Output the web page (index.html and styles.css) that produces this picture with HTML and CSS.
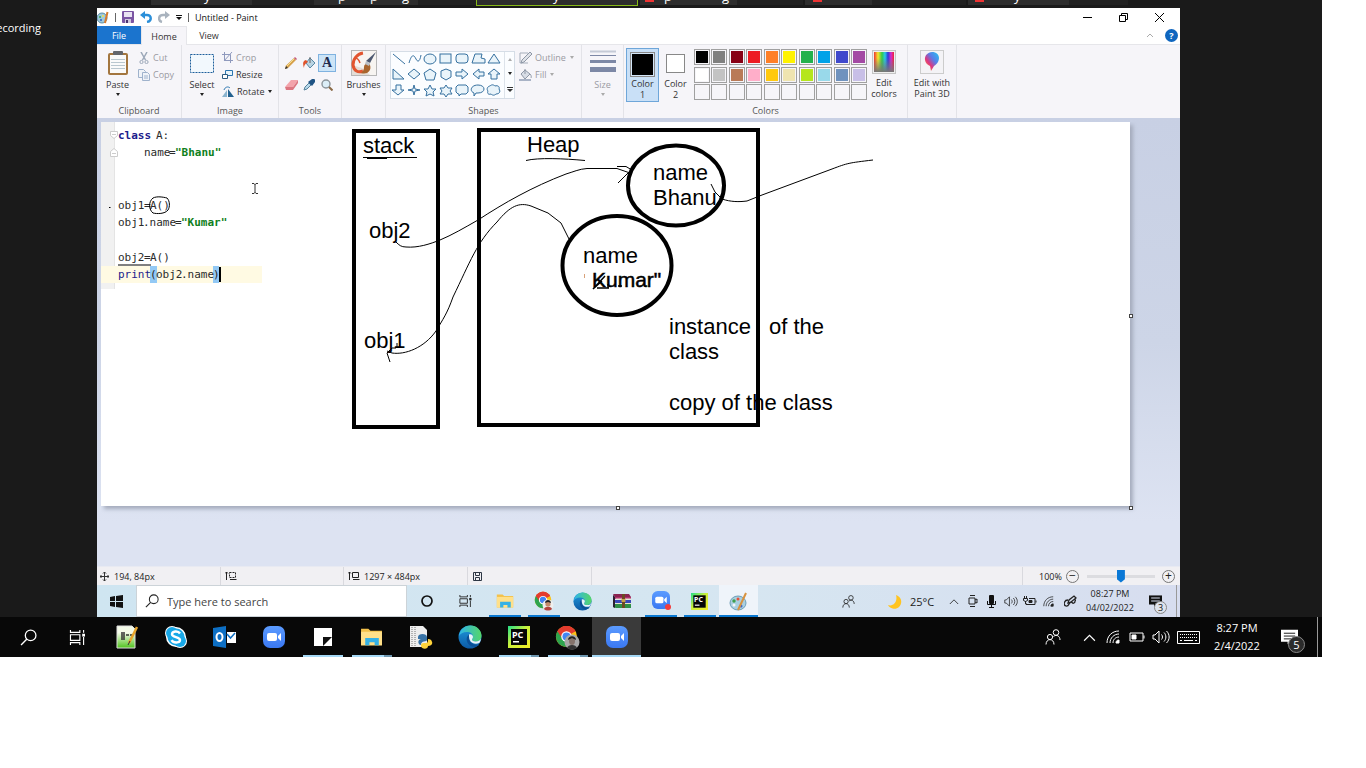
FILE: index.html
```html
<!DOCTYPE html>
<html lang="en">
<head>
<meta charset="utf-8">
<title>Untitled - Paint</title>
<link rel="stylesheet" href="styles.css">
</head>
<body>
<svg class="defs" aria-hidden="true">
  <defs>
    <linearGradient id="zoomBlue" x1="0" y1="0" x2="0" y2="1"><stop offset="0" stop-color="#5b9bff"/><stop offset="1" stop-color="#3a78f2"/></linearGradient>
    <linearGradient id="edgeA" x1="0" y1="0" x2="1" y2="0"><stop offset="0" stop-color="#2fb4ea"/><stop offset="1" stop-color="#55d668"/></linearGradient>
    <linearGradient id="edgeB" x1="0" y1="0" x2="0" y2="1"><stop offset="0" stop-color="#1f9bde"/><stop offset="1" stop-color="#0c59a4"/></linearGradient>
    <linearGradient id="pcFrame" x1="0" y1="0" x2="1" y2="1"><stop offset="0" stop-color="#21e08a"/><stop offset=".45" stop-color="#c9f03c"/><stop offset="1" stop-color="#f3ec25"/></linearGradient>
    <linearGradient id="rainbow"><stop offset="0" stop-color="#e33"/><stop offset=".2" stop-color="#f5e62d"/><stop offset=".4" stop-color="#31c94a"/><stop offset=".55" stop-color="#29c8e8"/><stop offset=".7" stop-color="#2c39d8"/><stop offset=".85" stop-color="#d62bd0"/><stop offset="1" stop-color="#e23"/></linearGradient>
    <linearGradient id="shade" x1="0" y1="0" x2="0" y2="1"><stop offset=".3" stop-color="#777" stop-opacity="0"/><stop offset="1" stop-color="#777"/></linearGradient>
    <linearGradient id="pin" x1="1" y1="0" x2="0" y2="1"><stop offset="0" stop-color="#22c7f0"/><stop offset=".4" stop-color="#5a7be8"/><stop offset=".65" stop-color="#e0367e"/><stop offset="1" stop-color="#f9c22d"/></linearGradient>
    <linearGradient id="greenNote" x1="0" y1="0" x2="0" y2="1"><stop offset=".3" stop-color="#f4fbe8"/><stop offset="1" stop-color="#4fc31c"/></linearGradient>
  </defs>
  <symbol id="i-zoom" viewBox="0 0 22 22"><rect width="22" height="22" rx="7" fill="url(#zoomBlue)"/><rect x="4" y="7" width="10" height="8" rx="2" fill="#fff"/><path d="M15 10l3-3v8l-3-3z" fill="#fff"/></symbol>
  <symbol id="i-folder" viewBox="0 0 22 20"><path d="M1 2h7l2 2h11v14H1z" fill="#f3c14b"/><path d="M1 5h20v13H1z" fill="#ffe08a"/><path d="M5 18v-7h13v7h-4v-3H9v3z" fill="#35b1e6"/></symbol>
  <symbol id="i-edge" viewBox="0 0 24 24"><circle cx="12" cy="12" r="11.500" fill="url(#edgeB)"/><path d="M1 11C2 4 7 .5 12.500.5 19 .5 23.500 5.500 23.500 10.500c0 4-3 6-6 6-2.500 0-3.500-1-3.500-2 0-.8 1-1.300 1-3 0-2.500-2.500-4.500-6-4.500C5 7 2 9 1 11z" fill="url(#edgeA)"/><path d="M10 10.500c-2 2-2 7 2 10 3 2 7 1.500 9-.5-2 .5-7 0-9-3.500-1.500-2.500-1-4.500 0-6-.5-.8-1.300-.7-2 0z" fill="#0b4f96"/><path d="M11 9.500c2-1 4 .5 4 2.500 0 1.200-1 1.700-1 2.500 0 1.300 1.500 2 3.500 2 3 0 5-1.500 5.500-3-.3 2-1 3.500-1.800 4.500-3 1.500-8 .8-9.400-3-.9-2.300-.8-4-.8-5.500z" fill="#e6f3f8"/></symbol>
  <symbol id="i-chrome" viewBox="0 0 24 24"><circle cx="12" cy="12" r="11" fill="#fbc116"/><path d="M12 12L2.500 6.500A11 11 0 0 1 21.500 6.500z" fill="#e33b2e"/><path d="M12 12L2.500 6.500A11 11 0 0 0 12 23l4.500-8z" fill="#2da44e"/><path d="M12 6.500h9.500a11 11 0 0 0-19 0L7.500 14z" fill="#e33b2e"/><circle cx="12" cy="12" r="5.500" fill="#fff"/><circle cx="12" cy="12" r="4.200" fill="#4285f4"/></symbol>
  <symbol id="i-pc" viewBox="0 0 22 22"><rect width="22" height="22" fill="url(#pcFrame)"/><rect x="3" y="3" width="16" height="16" fill="#060606"/><rect x="5" y="15" width="6" height="1.500" fill="#fff"/><text x="4" y="12" class="pc-text">PC</text></symbol>
  <symbol id="i-search" viewBox="0 0 16 16"><circle cx="10" cy="6" r="5" fill="none" stroke="currentColor" stroke-width="1.200"/><path d="M6.500 9.500L1 15" stroke="currentColor" stroke-width="1.300"/></symbol>
  <symbol id="i-task" viewBox="0 0 17 16"><path d="M1 0v2.500h10V0M1 16v-2.500h10V16M1 5h10v6H1zM15 0v3M15 7.500V16" fill="none" stroke="currentColor" stroke-width="1.200"/><rect x="13.500" y="4" width="3" height="3" fill="currentColor"/></symbol>
  <symbol id="i-people" viewBox="0 0 16 16"><circle cx="11" cy="3.500" r="2.800"/><circle cx="5" cy="8" r="2.600"/><path d="M1 15.500c0-6.500 8-6.500 8 0M8.500 7.500c3-2.500 6.500-.5 6.500 3.500"/></symbol>
  <symbol id="i-chev" viewBox="0 0 12 8"><path d="M1 7l5-5 5 5"/></symbol>
  <symbol id="i-wifi" viewBox="0 0 14 14"><path d="M1 13C1 6 6 1 13 1M4 13c0-5 4-9 9-9M7 13c0-3.500 2.500-6 6-6"/><path d="M10 13c0-2 1-3 3-3v3z" fill="currentColor"/></symbol>
  <symbol id="i-vol" viewBox="0 0 18 14"><path d="M1 5h2l4-4v12L3 9H1zM9.500 4.500c1.300 1.500 1.300 3.500 0 5M12 2.500c2.500 2.500 2.500 6.500 0 9M14.500 1c3.500 3.500 3.500 8.500 0 12"/></symbol>
  <symbol id="i-batt" viewBox="0 0 16 10"><path d="M1 1h13v8H1zM15 3.500v3"/><path d="M3 3h4v4H3z" fill="currentColor"/></symbol>
  <symbol id="i-size" viewBox="0 0 12 10"><path d="M1.500 9V1M0 2.500L1.500 1 3 2.500"/><path d="M4.500 1.500h6v5h-6z"/><path d="M5 8.500h6.500"/></symbol>
  <symbol id="i-note" viewBox="0 0 18 16"><path d="M0 0h18v13h-8l-3 3v-3H0z" fill="currentColor"/></symbol>
</svg>

<div class="screen">
  <div class="tabstrip">
    <div class="tab t1"><span>y</span></div><div class="tab t2"></div>
    <div class="tab t3"><span>p</span><span>p</span><span>g</span></div><div class="tab t4"></div>
    <div class="tab t5"><span>y</span></div>
    <div class="tab t6"><i class="yt"></i><span>p</span><span class="far">g</span></div><div class="tab t7"></div>
    <div class="tab t8"><i class="yt"></i></div><div class="tab t9"></div>
    <div class="tab t10"><i class="yt"></i><span>y</span></div><div class="tab t11"></div>
  </div>

  <div class="stage">
    <div class="recording">ecording</div>
    <main class="paint">
      <header class="titlebar">
        <svg width="12" height="13" viewBox="0 0 12 13"><ellipse cx="5" cy="7" rx="5" ry="5" fill="#9fc9dc" stroke="#5b8ea6"/><circle cx="3" cy="6" r="1" fill="#3ba04a"/><circle cx="6" cy="5" r="1" fill="#f6e04a"/><circle cx="4" cy="9" r="1" fill="#2a62c4"/><path d="M10.500 1L8 12" stroke="#d67a2c" stroke-width="2"/></svg>
        <span class="vline"></span>
        <button class="qa" aria-label="Save"><svg width="12" height="12" viewBox="0 0 12 12"><rect width="12" height="12" rx="1" fill="#7b55a3"/><rect x="2" y="1" width="8" height="5" fill="#e9e3f2"/><rect x="3" y="8" width="6" height="4" fill="#cfc7dd"/><rect x="4" y="9" width="2" height="3" fill="#4a3370"/></svg></button>
        <button class="qa" aria-label="Undo"><svg width="12" height="12" viewBox="0 0 12 12"><path d="M3 4h4c5 0 5 6 0 7" fill="none" stroke="#2b8fd9" stroke-width="2.400"/><path d="M0 4l5-4v8z" fill="#2b8fd9"/></svg></button>
        <button class="qa" aria-label="Redo"><svg width="12" height="12" viewBox="0 0 12 12"><path d="M9 4H5C0 4 0 10 4 11" fill="none" stroke="#a9b3be" stroke-width="2.400"/><path d="M12 4L7 0v8z" fill="#a9b3be"/></svg></button>
        <button class="qa small" aria-label="Customize"><svg width="6" height="5" viewBox="0 0 6 5"><path d="M0 .5h6" stroke="#111"/><path d="M0 2h6L3 5z" fill="#111"/></svg></button>
        <span class="vline"></span>
        <h1>Untitled - Paint</h1>
        <div class="wincontrols">
          <button aria-label="Minimize"><svg width="9" height="9" viewBox="0 0 9 9"><path d="M0 4.500h9" stroke="#000"/></svg></button>
          <button aria-label="Restore"><svg width="9" height="9" viewBox="0 0 9 9"><path d="M.5 2.500h6v6h-6zM2.500 2V.5h6v6H7" fill="none" stroke="#000"/></svg></button>
          <button aria-label="Close"><svg width="9" height="9" viewBox="0 0 9 9"><path d="M0 0l9 9M9 0L0 9" stroke="#000"/></svg></button>
        </div>
      </header>
      <nav class="menutabs">
        <button class="file">File</button><button class="home">Home</button><button class="view">View</button>
        <div class="helparea">
          <button aria-label="Collapse ribbon"><svg width="6" height="4" viewBox="0 0 6 4"><path d="M0 4l3-3 3 3" fill="none" stroke="#aaa"/></svg></button>
          <button class="help" aria-label="Help">?</button>
        </div>
      </nav>

      <section class="ribbon">
        <div class="group g-clip">
          <div class="body">
            <button class="big w-clip"><svg width="22" height="26" viewBox="0 0 22 26"><rect x="1" y="3" width="20" height="22" rx="2" fill="#a3763f"/><rect x="3" y="5" width="16" height="18" fill="#fafafa"/><path d="M4 9.500h14M4 12.500h14M4 15.500h14M4 18.500h14" stroke="#b9c7cf"/><rect x="6" y="1" width="10" height="4" rx="1" fill="#63666c"/></svg><span>Paste</span><b class="arrow"></b></button>
            <div class="stack">
              <button class="line off"><svg width="12" height="12" viewBox="0 0 12 12"><path d="M3 0l4.500 8M9 0L4.500 8" stroke="#9ba7b8" stroke-width="1.500"/><circle cx="3.500" cy="10" r="1.600" fill="none" stroke="#9ba7b8"/><circle cx="8.500" cy="10" r="1.600" fill="none" stroke="#9ba7b8"/></svg>Cut</button>
              <button class="line off"><svg width="12" height="12" viewBox="0 0 12 12"><path d="M.5.500h5l2 2v6h-7z" fill="#f0f3f8" stroke="#9fb2cc"/><path d="M4.500 3.500h5l2 2v6h-7z" fill="#f0f3f8" stroke="#9fb2cc"/><path d="M6 7h4M6 9h4" stroke="#9fb2cc"/></svg>Copy</button>
            </div>
          </div>
          <div class="caption">Clipboard</div>
        </div>
        <div class="group g-image">
          <div class="body">
            <button class="big w-sel"><svg width="24" height="26" viewBox="0 0 24 26"><rect x=".5" y="4.500" width="23" height="18" fill="#f2f8fd" stroke="#1d5f9b" stroke-dasharray="2 1"/></svg><span>Select</span><b class="arrow"></b></button>
            <div class="stack">
              <button class="line off"><svg width="11" height="11" viewBox="0 0 11 11"><path d="M2.500 0v8.500H11M0 2.500h8.500V11M10 0L2 9" fill="none" stroke="#8f99bd"/></svg>Crop</button>
              <button class="line"><svg width="11" height="11" viewBox="0 0 11 11"><path d="M3.500 1.500h7v5h-7z" fill="#e8f4fb" stroke="#2c76b0"/><path d="M.5 5.500h5v4h-5z" fill="#fff" stroke="#2c5a80"/></svg>Resize</button>
              <button class="line"><svg width="12" height="11" viewBox="0 0 12 11"><path d="M6 3l6 8H6z" fill="#23618f"/><path d="M5 4v7H0z" fill="#8bb4cf"/><path d="M2 4c1-3 4-4 6-2" fill="none" stroke="#2c76b0"/></svg>Rotate<b class="arrow side"></b></button>
            </div>
          </div>
          <div class="caption">Image</div>
        </div>
        <div class="group g-tools">
          <div class="toolgrid">
            <button aria-label="Pencil"><svg width="12" height="12" viewBox="0 0 12 12"><path d="M0 12l1-3.500 8-7.500 2 2-8 8z" fill="#d6a04c"/><path d="M0 12l1-3 2 2z" fill="#333"/><path d="M9 1l2 2 1-1-2-2z" fill="#c3577a"/><path d="M2 9l7-7" stroke="#f7e08c"/></svg></button>
            <button aria-label="Fill"><svg width="13" height="12" viewBox="0 0 13 12"><path d="M7 1l5 5-5 5-4-5z" fill="#b9d3e2" stroke="#5a88a4"/><path d="M7 0v6" stroke="#666"/><path d="M3 3C-1 4 0 8 1 11c0-3 1-4 4-6z" fill="#e0532c"/></svg></button>
            <button class="on" aria-label="Text">A</button>
            <button aria-label="Eraser"><svg width="13" height="10" viewBox="0 0 13 10"><path d="M6 0h7L8 7H0z" fill="#f3a3ab"/><path d="M0 7h8l5-7v3L8 10H1z" fill="#dc7681"/></svg></button>
            <button aria-label="Pick color"><svg width="12" height="12" viewBox="0 0 12 12"><path d="M1 11l1-3 4-4 2 2-4 4z" fill="#b7d9ec" stroke="#56829b"/><path d="M5 3l4 4 3-4c1-2-1-4-3-3z" fill="#1f5384"/></svg></button>
            <button aria-label="Magnifier"><svg width="12" height="12" viewBox="0 0 12 12"><circle cx="5" cy="5" r="4" fill="#dceef8" stroke="#8b949b" stroke-width="1.400"/><path d="M8 8l3.500 3.500" stroke="#8a6a47" stroke-width="2"/></svg></button>
          </div>
          <div class="caption">Tools</div>
        </div>
        <div class="group g-brush">
          <div class="body">
            <button class="big"><svg width="26" height="26" viewBox="0 0 26 26"><rect x=".5" y=".5" width="25" height="25" fill="#f7f4f1" stroke="#b6b6b6"/><path d="M1 25V15l10 3 8 7z" fill="#e4ddd6"/><path d="M12 3C6 4 2 9 2 15c1 6 5 8 10 6" fill="none" stroke="#e2552f" stroke-width="3"/><path d="M4 8c3 0 4 2 5 5" fill="none" stroke="#e2552f" stroke-width="1.500"/><path d="M25 2l-6 11-4-2z" fill="#4d5870"/><path d="M19 15c-2-3-6-1-6 2 0 3-1 4-3 6 6 2 11-2 9-8z" fill="#a8652d"/><path d="M15 11l4 2-1 3-4-2z" fill="#b9bfc6"/></svg><span>Brushes</span><b class="arrow"></b></button>
          </div>
        </div>
        <div class="group g-shapes">
          <div class="body">
            <div class="gallery">
              <svg width="113" height="46" viewBox="1 1 113 46" fill="#e9f4fa" stroke="#35709f">
                <path d="M3 3l12 10M19 12c3-10 5-8 7-4s4 2 5-4" fill="none"/><ellipse cx="40" cy="8" rx="6" ry="5"/><rect x="50" y="3" width="11" height="9"/><rect x="66" y="3" width="12" height="9" rx="3"/><path d="M82 12l3-9h7l-1 4 4 1v4zM104 3l6 9H98z"/>
                <path d="M3 18v10h11zM24 18l6 5-6 5-6-5zM40 18l6 4-2 7h-8l-2-7zM56 18l5 2v6l-5 3-5-3v-6zM66 21h6v-3l6 5-6 5v-3h-6zM94 21h-5v-3l-6 5 6 5v-3h5zM104 18l6 5h-3v5h-6v-5h-3z"/>
                <path d="M6 34h5v5h3l-6 5-6-5h4zM24 34l1 4 5 1-5 1-1 4-1-4-5-1 5-1zM40 34l2 4h4l-3 3 1 4-4-2-4 2 1-4-3-3h4zM56 34l2 3h4l-2 3 2 3h-4l-2 3-2-3h-4l2-3-2-3h4zM68 34h8l2 2v5l-2 2h-5l-2 2v-2h-1l-2-2v-5zM88 34c8 0 8 8 0 8h-2l-2 3v-3c-5-2-3-8 4-8zM100 35c2-2 4-1 5 0 3-1 5 1 4 3 2 3 0 5-3 5-2 2-4 1-5 0-3 1-4-1-3-3-2-2 0-5 2-5z"/>
              </svg>
              <div class="scroll"><button class="dim" aria-label="Scroll up"><b class="arrow up"></b></button><button aria-label="Scroll down"><b class="arrow"></b></button><button aria-label="More shapes"><svg width="6" height="5" viewBox="0 0 6 5"><path d="M0 .5h6" stroke="#333"/><path d="M0 2h6L3 5z" fill="#333"/></svg></button></div>
            </div>
            <div class="stack">
              <button class="line off"><svg width="13" height="12" viewBox="0 0 13 12"><path d="M9 1H1v10h8" fill="none" stroke="#a5adba"/><path d="M2 11l1-3 8-8 2 2-8 8z" fill="#dfe2e8" stroke="#8e97a6"/></svg>Outline<b class="arrow side"></b></button>
              <button class="line off"><svg width="13" height="12" viewBox="0 0 13 12"><path d="M6 1l5 4-5 5-4-5z" fill="#d8dde6" stroke="#8e97a6"/><path d="M6 0v5M11 5c2 2 1 4 1 4" stroke="#8e97a6" fill="none"/><rect y="10" width="12" height="2" fill="#a9b3c6"/></svg>Fill<b class="arrow side"></b></button>
            </div>
          </div>
          <div class="caption">Shapes</div>
        </div>
        <div class="group g-size">
          <div class="body">
            <button class="big off"><svg width="26" height="26" viewBox="0 0 26 26"><path d="M0 1.500h26" stroke="#c5cad6" stroke-width="2"/><path d="M0 5.500h26" stroke="#7d88a6"/><path d="M0 11.500h26" stroke="#7d88a6" stroke-width="3"/><path d="M0 19.500h26" stroke="#7d88a6" stroke-width="5"/></svg><span>Size</span><b class="arrow"></b></button>
          </div>
        </div>
        <div class="group g-colors">
          <div class="body">
            <button class="big w-col sel"><i class="ink black"></i><span>Color<br>1</span></button>
            <button class="big w-col"><i class="ink white"></i><span>Color<br>2</span></button>
            <div class="palette">
              <i class="c1"></i><i class="c2"></i><i class="c3"></i><i class="c4"></i><i class="c5"></i><i class="c6"></i><i class="c7"></i><i class="c8"></i><i class="c9"></i><i class="c10"></i>
              <i class="c11"></i><i class="c12"></i><i class="c13"></i><i class="c14"></i><i class="c15"></i><i class="c16"></i><i class="c17"></i><i class="c18"></i><i class="c19"></i><i class="c20"></i>
              <i></i><i></i><i></i><i></i><i></i><i></i><i></i><i></i><i></i><i></i>
            </div>
            <button class="big w-edit"><svg width="24" height="26" viewBox="0 0 24 26"><rect x=".5" y=".5" width="23" height="23" fill="#eee" stroke="#c4c4c4"/><rect x="2" y="2" width="20" height="20" fill="url(#rainbow)"/><rect x="2" y="2" width="20" height="20" fill="url(#shade)"/></svg><span>Edit<br>colors</span></button>
          </div>
          <div class="caption">Colors</div>
        </div>
        <div class="group g-3d">
          <div class="body">
            <button class="big"><svg width="24" height="26" viewBox="0 0 24 26"><rect x=".5" y=".5" width="23" height="23" fill="#f4f3f6" stroke="#ccc"/><path d="M12 2c9 0 9 10 2 14l-3 5-1-5C3 13 3 3 12 2z" fill="url(#pin)"/></svg><span>Edit with<br>Paint 3D</span></button>
          </div>
        </div>
      </section>

      <section class="workspace">
        <div class="canvas">
          <svg class="art" width="1029" height="384" viewBox="101 122 1029 384">
            <rect x="101" y="122" width="13" height="167" fill="#f1f1f1"/>
            <path d="M114.500 122v167" stroke="#e4e4e4"/>
            <rect x="101" y="266" width="161" height="17" fill="#fffae3"/>
            <rect x="150" y="266" width="7" height="17" fill="#93c9f5"/><rect x="213" y="266" width="6" height="17" fill="#93c9f5"/>
            <path d="M110.500 131.500h7v4l-3.500 3-3.500-3zM110.500 156.500h7v-5l-3.500-3-3.500 3zM112 134.500h4M112 153.500h4" fill="#fff" stroke="#ccc"/>
            <g class="code">
              <text y="139"><tspan x="118" class="kw">class</tspan><tspan x="156">A:</tspan></text>
              <text y="156"><tspan x="144">name</tspan><tspan x="169">=</tspan><tspan x="175" class="str">"Bhanu"</tspan></text>
              <text y="209"><tspan x="118">obj1</tspan><tspan x="144">=</tspan><tspan x="150">A()</tspan></text>
              <text y="226"><tspan x="118">obj1</tspan><tspan x="143">.name</tspan><tspan x="175">=</tspan><tspan x="181" class="str">"Kumar"</tspan></text>
              <text y="261"><tspan x="118">obj2</tspan><tspan x="144">=</tspan><tspan x="150">A()</tspan></text>
              <text y="278"><tspan x="118" class="fn">print</tspan><tspan x="150">(</tspan><tspan x="156">obj2</tspan><tspan x="181">.name</tspan><tspan x="213">)</tspan></text>
            </g>
            <path d="M220 267v15" stroke="#000" stroke-width="2"/>
            <g fill="none" stroke="#000">
              <path d="M118 265h33M109 207.500h1.500"/>
              <path d="M153 198c4-2 10-1 14 0 3 3 3 9 1 12-3 4-11 4-15 3-4-3-5-11 0-15z"/>
              <path d="M252 183.500h2l1 1 1-1h2M255 184v9M252 193.500h2l1-1 1 1h2" stroke="#333"/>
            </g>
            <g fill="none" stroke="#000" stroke-width="4">
              <rect x="354" y="131" width="84" height="296"/>
              <rect x="479" y="130" width="279" height="295"/>
              <ellipse cx="676" cy="185.500" rx="48" ry="40"/>
              <ellipse cx="617" cy="265.500" rx="54.500" ry="49.500"/>
            </g>
            <g fill="none" stroke="#000">
              <path d="M363 157.500h54M367 158.500h20M526 160.500c12-3 38-2 59 0"/>
              <path d="M396 242c3 3 5 5 10 5 12 1 24-3 34-7 12-5 24-12 38-20 26-17 54-33 88-46 7-2 13-5 21-5.500h30l13 4.500M617 166.500h9l5 3M630 171l-12 12"/>
              <path d="M569 239l-8-16-13-10-17-7c-12-4-21 0-34 16-20 20-27 40-44 75-6 17-10 22-17 34-12 17-31 24-44 22l-5-2M396 348h-4l-5 5 3 9M397 348v-5"/>
              <path d="M711 184l4 8 7 7c9 3 17 3 25 2l15-6 70-26c16-6 16-6 41-9"/>
              <path d="M605 276l-12 13 9-8M608 284v4M597 288h12M618 286h4" stroke-width="1.500"/>
              <path d="M584.500 274v4" stroke="#d9a27a"/>
            </g>
            <g class="label">
              <text x="363" y="153">stack</text><text x="527" y="152">Heap</text>
              <text x="369" y="238">obj2</text><text x="364" y="348">obj1</text>
              <text x="653" y="180">name</text><text x="653" y="205">Bhanu</text>
              <text x="583" y="263">name</text><text x="592" y="287" class="kumar">Kumar"</text>
              <text x="669" y="334">instance</text><text x="769" y="334">of the</text><text x="669" y="359">class</text>
              <text x="669" y="410">copy of the class</text>
            </g>
          </svg>
          <i class="handle h-r"></i><i class="handle h-b"></i><i class="handle h-c"></i>
        </div>
      </section>

      <footer class="status">
        <div class="s1"><svg width="9" height="9" viewBox="0 0 9 9"><path d="M4.500 0v9M0 4.500h9M3 1.500L4.500 0 6 1.500M3 7.500L4.500 9 6 7.500M1.500 3L0 4.500 1.500 6M7.500 3L9 4.500 7.500 6" fill="none" stroke="#333"/></svg>194, 84px</div>
        <div class="s2"><svg class="ic" width="12" height="10" viewBox="0 0 12 10"><path d="M1.500 9V1M0 2.500L1.500 1 3 2.500"/><path d="M4.500 1.500h6v5h-6z" stroke-dasharray="2 1"/><path d="M5 8.500h6.500"/></svg></div>
        <div class="s3"><svg class="ic" width="12" height="10"><use href="#i-size"/></svg>1297 × 484px</div>
        <div class="s4"><svg width="9" height="9" viewBox="0 0 9 9"><path d="M.5.500h8v8h-8zM2.500.500v3h4v-3M2.500 8.500v-3h4v3" fill="none" stroke="#2d3644"/></svg></div>
        <div class="s5"></div>
        <div class="s6"><label for="zoom">100%</label><button aria-label="Zoom out">−</button><input id="zoom" type="range" min="0" max="100" value="50"><button aria-label="Zoom in">+</button></div>
      </footer>

      <div class="bar inner">
        <button class="start" aria-label="Start"><svg width="13" height="13" viewBox="0 0 13 13"><path d="M0 2l5-1v5H0zM6 1l7-1v6H6zM0 7h5v5l-5-1zM6 7h7v6l-7-1z" fill="#111"/></svg></button>
        <div class="searchbox"><svg width="14" height="14"><use href="#i-search"/></svg><input type="text" aria-label="Search" placeholder="Type here to search"></div>
        <button class="app" aria-label="Cortana"><svg width="14" height="14" viewBox="0 0 14 14"><circle cx="7" cy="7" r="5" fill="none" stroke="#111" stroke-width="1.700"/></svg></button>
        <button class="app" aria-label="Task View"><svg width="13" height="12"><use href="#i-task"/></svg></button>
        <button class="app run" aria-label="File Explorer"><svg width="18" height="18"><use href="#i-folder"/></svg></button>
        <button class="app run" aria-label="Chrome"><svg width="20" height="20" viewBox="0 0 20 20"><use href="#i-chrome" width="18" height="18"/><circle cx="14" cy="14" r="5.500" fill="#eee"/><circle cx="14" cy="13" r="2.600" fill="#c58a6a"/><path d="M11 12c0-4 6-4 6 0l-3-1z" fill="#222"/><path d="M10 18c1-3 7-3 8 0-2 2-6 2-8 0z" fill="#b3423c"/></svg></button>
        <button class="app" aria-label="Edge"><svg width="19" height="19"><use href="#i-edge"/></svg></button>
        <button class="app" aria-label="WinRAR"><svg width="20" height="16" viewBox="0 0 20 16"><path d="M1 1h16l2 3H3z" fill="#8a2350"/><path d="M1 2v3l3 1h15V4H3z" fill="#b02f6d"/><path d="M1 6v3l3 1h15V7H3z" fill="#3a49b8"/><path d="M1 11v3l3 1h15v-4H3z" fill="#2f8f46"/><path d="M4 6h15M4 10.500h15" stroke="#e9e3c8"/><path d="M1 2v12l2 1V4z" fill="#2a2030"/><rect x="10" y="1" width="3" height="14" fill="#6b4a23"/><rect x="9.500" y="6" width="4" height="3" fill="#c9a24b"/></svg></button>
        <button class="app run" aria-label="Zoom"><svg width="20" height="20" viewBox="0 0 20 20"><use href="#i-zoom" x="1" width="18" height="18"/><circle cx="17" cy="16" r="3" fill="#f23c3c"/></svg></button>
        <button class="app run" aria-label="PyCharm"><svg width="17" height="17"><use href="#i-pc"/></svg></button>
        <button class="app run active" aria-label="Paint"><svg width="19" height="19" viewBox="0 0 19 19"><ellipse cx="9" cy="11" rx="8" ry="7" fill="#a9cfe0" stroke="#6f9fb8"/><circle cx="5" cy="9" r="1.700" fill="#3f9f4d"/><circle cx="9" cy="7" r="1.500" fill="#e5523b"/><circle cx="5" cy="13" r="1.500" fill="#f4f6f8"/><circle cx="12" cy="14" r="1.500" fill="#3c63c9"/><path d="M17 1L9 18" stroke="#d8923f" stroke-width="2"/></svg></button>
        <div class="tray">
          <svg class="ic people" width="13" height="13"><use href="#i-people"/></svg>
          <span class="moon"><svg width="15" height="15" viewBox="0 0 15 15"><path d="M9 1a7 7 0 1 1-8 10c5 2 10-3 8-10z" fill="#ffc420"/></svg></span>
          <span class="temp">25°C</span>
          <span><svg class="ic" width="10" height="7"><use href="#i-chev"/></svg></span>
          <span><svg class="ic" width="10" height="12" viewBox="0 0 10 12"><path d="M1 3h6v6H1zM7 5l2-1v4L7 7M2 .5h5M2 11.500h5"/></svg></span>
          <span><svg width="9" height="13" viewBox="0 0 9 13"><rect x="2" width="5" height="9" rx="1" fill="#111"/><path d="M.5 6v3.500h8V6M4.500 9v4M2 12.500h5" fill="none" stroke="#111"/></svg></span>
          <span><svg class="ic" width="14" height="11"><use href="#i-vol"/></svg></span>
          <span><svg class="ic" width="14" height="11" viewBox="0 0 14 11"><path d="M6 2.500h6v6H3V7M13 4.500v2M1.500 0v2M3.500 0v2M.5 2.500h4v2l-2 1-2-1zM2.500 5v3"/><path d="M6 4.500h3v2H6z" fill="currentColor"/></svg></span>
          <span><svg class="ic" width="11" height="11"><use href="#i-wifi"/></svg></span>
          <span class="pen"><svg class="ic" width="13" height="12" viewBox="0 0 13 12"><path d="M4 8l1-3 5-4 2 2-5 4zM4 5C0 5-1 10 2 11s3-4 5-4 1 2 3 1 0-3 2-3" stroke-width="1.300"/></svg></span>
          <time class="clock">08:27 PM<br>04/02/2022</time>
          <button class="notif" aria-label="3 notifications"><svg width="13" height="12" viewBox="0 0 18 16"><use href="#i-note" width="18" height="16"/><path d="M3 4h12M3 8h12" stroke="#d7ddef" stroke-width="1.400"/></svg><em>3</em></button>
          <i class="peek"></i>
        </div>
      </div>
    </main>
  </div>

  <div class="bar outer">
    <button class="app" aria-label="Search"><svg width="17" height="17"><use href="#i-search"/></svg></button>
    <button class="app" aria-label="Task View"><svg width="17" height="15"><use href="#i-task"/></svg></button>
    <button class="app" aria-label="Notepad++"><svg width="22" height="24" viewBox="0 0 22 24"><path d="M1 1h15l3 3v19H1z" fill="url(#greenNote)" stroke="#ddd"/><path d="M6 7v8M8 7v8M10 10h3M14 10h3" stroke="#333" stroke-width="1.500"/><path d="M21 2l-8 16" stroke="#e8a52b" stroke-width="2.500"/><path d="M14 16l-2 4" stroke="#333"/></svg></button>
    <button class="app" aria-label="Skype"><svg width="22" height="22" viewBox="0 0 22 22"><circle cx="7" cy="7" r="7" fill="#fff"/><circle cx="15" cy="15" r="7" fill="#fff"/><circle cx="11" cy="11" r="10" fill="#fff"/><circle cx="7" cy="7" r="6" fill="#18a8e8"/><circle cx="15" cy="15" r="6" fill="#18a8e8"/><circle cx="11" cy="11" r="8.500" fill="#18a8e8"/><path d="M15 7.500c-2-3-8-2.500-8 .8s8 2.200 8 5.700c0 3-6.500 3.500-8.500.2" fill="none" stroke="#fff" stroke-width="2.400"/></svg></button>
    <button class="app" aria-label="Outlook"><svg width="23" height="22" viewBox="0 0 23 22"><path d="M0 2l13-2v22L0 20z" fill="#0d6fc4"/><ellipse cx="6.500" cy="11" rx="3" ry="4" fill="none" stroke="#fff" stroke-width="2"/><path d="M14 6h9v11h-9z" fill="#fff"/><path d="M14 8l3.500 4L22 7" fill="none" stroke="#0d6fc4" stroke-width="1.500"/></svg></button>
    <button class="app" aria-label="Zoom"><svg width="22" height="22"><use href="#i-zoom"/></svg></button>
    <button class="app run" aria-label="Sticky Notes"><svg width="18" height="18" viewBox="0 0 18 18"><path d="M0 0h18v18H0z" fill="#fff"/><path d="M9 9h9l-9 9z" fill="#111"/></svg></button>
    <button class="app run multi" aria-label="File Explorer"><svg width="23" height="22"><use href="#i-folder"/></svg></button>
    <button class="app" aria-label="Python"><svg width="24" height="24" viewBox="0 0 24 24"><path d="M1 1h13l4 4v17H1z" fill="#eee"/><path d="M3 2v19M6 2v19" stroke="#777" stroke-dasharray="1 1"/><path d="M9 14v-2c0-4 9-4 9 0v3c0 2-6 0-6 5-3 0-4-5 0-6z" fill="#3873a6"/><path d="M22 15c3 4 0 6-3 6 0 4-7 3-7 0s1-3 5-3c2 0 2-2 2-4 1 0 2 0 3 1z" fill="#ffd43b"/></svg></button>
    <button class="app" aria-label="Edge"><svg width="24" height="24"><use href="#i-edge"/></svg></button>
    <button class="app run multi" aria-label="PyCharm"><svg width="22" height="22"><use href="#i-pc"/></svg></button>
    <button class="app run multi" aria-label="Chrome"><svg width="25" height="25" viewBox="0 0 25 25"><use href="#i-chrome" width="23" height="23"/><circle cx="17" cy="17" r="7.500" fill="#a7a7a7"/><ellipse cx="17" cy="16" rx="3" ry="4" fill="#85736b"/><path d="M13 15c0-5 8-5 8 0l-4-2z" fill="#222"/><path d="M12 23c1-4 9-4 10 0-3 2-7 2-10 0z" fill="#333"/></svg></button>
    <button class="app run active" aria-label="Zoom meeting"><svg width="22" height="22"><use href="#i-zoom"/></svg></button>
    <div class="tray">
      <svg class="ic people" width="16" height="16"><use href="#i-people"/></svg>
      <span><svg class="ic" width="13" height="9"><use href="#i-chev"/></svg></span>
      <span><svg class="ic" width="14" height="14"><use href="#i-wifi"/></svg></span>
      <span><svg class="ic" width="16" height="10"><use href="#i-batt"/></svg></span>
      <span><svg class="ic" width="18" height="14"><use href="#i-vol"/></svg></span>
      <span class="keys"><svg class="ic" width="23" height="13" viewBox="0 0 23 13"><path d="M.5.500h22v12H.5z"/><path d="M3 3.500h17M3 6.500h17" stroke-dasharray="1 1"/><path d="M3 9.500h2M7 9.500h9M18 9.500h2"/></svg></span>
      <time class="clock">8:27 PM<br>2/4/2022</time>
      <button class="notif" aria-label="5 notifications"><svg width="17" height="16" viewBox="0 0 18 16"><use href="#i-note" width="18" height="16"/><path d="M3 4h12M3 7h12M3 10h8" stroke="#111"/></svg><em>5</em></button>
      <i class="peek"></i>
    </div>
  </div>
</div>
</body>
</html>
```
FILE: styles.css
```css
* { box-sizing: border-box; }
body { margin: 0; background: #fff; font-family: "Open Sans", "Noto Sans", sans-serif; font-size: 9px; color: #333; }
button { font: inherit; color: inherit; background: none; border: 0; padding: 0; margin: 0; }
svg { display: block; flex: none; }
i, em { font-style: normal; }
.defs { position: absolute; width: 0; height: 0; }
.ic { fill: none; stroke: currentColor; }
.pc-text { font: bold 9px "Noto Sans", sans-serif; fill: #fff; }

.screen { margin-right: 44px; background: #1a1a1a; }
.tabstrip { display: flex; height: 8px; padding: 0 0 3px 151px; overflow: hidden; }
.tab { display: flex; gap: 24px; height: 5px; overflow: hidden; background: #212121; color: #fff; font-size: 13px; line-height: 5px; }
.tab span { margin-top: -7px; height: 10px; line-height: 6px; }
.t1, .t3, .t5, .t6, .t8, .t10 { background: #2d2d2d; }
.t1 { width: 101px; padding-left: 53px; }
.t2 { width: 62px; }
.t3 { width: 104px; padding-left: 24px; }
.t4 { width: 58px; }
.t5 { width: 162px; height: 6px; padding-left: 76px; border: solid #86b817; border-width: 0 1px 1px; }
.t6 { width: 97px; gap: 10px; padding-left: 5px; margin-left: 2px; }
.t6 .far { margin-left: 40px; }
.t7 { width: 66px; }
.t8 { width: 67px; padding-left: 8px; margin-left: 2px; }
.t9 { width: 94px; }
.t10 { width: 101px; padding-left: 7px; margin-left: 2px; gap: 30px; }
.t11 { width: 59px; }
.yt { width: 9px; height: 2px; background: #e33; }

.stage { display: flex; padding-right: 142px; }
.recording { display: flex; justify-content: flex-end; width: 41px; margin: 12px 56px 0 0; height: 16px; overflow: hidden; color: #fff; font-size: 11px; line-height: 16px; }
.paint { flex: 1; min-width: 0; background: #fff; }

.titlebar { display: flex; align-items: center; height: 18px; gap: 6px; color: #111; }
.titlebar h1 { margin: 0; font-size: 9px; font-weight: normal; }
.vline { width: 1px; height: 9px; background: #666; }
.wincontrols { display: flex; gap: 27px; margin: 0 16px 0 auto; }

.menutabs { display: flex; height: 19px; border-bottom: 1px solid #e6e6ea; }
.file { width: 44px; background: #1b74ce; color: #fff; }
.home { width: 46px; height: 19px; background: #f6f5f9; border: solid #e6e6ea; border-width: 1px 1px 0; }
.view { width: 44px; }
.helparea { display: flex; align-items: center; gap: 12px; margin: 0 2px 0 auto; }
.help { width: 13px; height: 13px; border-radius: 50%; background: #0f66bf; color: #fff; font-weight: bold; line-height: 13px; }

.ribbon { display: flex; height: 73px; background: #f6f5f9; }
.group { display: flex; flex-direction: column; justify-content: space-between; border-right: 1px solid #e3e3e8; padding-top: 2px; }
.caption { text-align: center; line-height: 12px; color: #555; padding-bottom: 1px; }
.body { display: flex; }
.big { display: flex; flex-direction: column; align-items: center; width: 100%; padding-top: 3px; line-height: 11px; }
.big span { margin-top: 3px; }
.big .arrow { margin-top: 3px; }
.arrow { border: solid transparent; border-width: 3px 2px 0; border-top-color: #222; }
.off { color: #9a9aa2; }
.off .arrow, .dim .arrow { border-top-color: #aaa; }
.stack { display: flex; flex-direction: column; padding-top: 2px; }
.line { display: flex; align-items: center; gap: 3px; height: 17px; white-space: nowrap; }
.side { margin-left: 1px; }
.g-clip { width: 85px; }
.w-clip { width: 41px; }
.g-image { width: 97px; }
.w-sel { width: 40px; }
.g-tools { width: 63px; }
.toolgrid { display: grid; grid-template-columns: repeat(3, 18px); grid-auto-rows: 18px; row-gap: 4px; padding: 7px 4px 0 3px; }
.toolgrid button { display: grid; place-items: center; }
.toolgrid .on { border: 1px solid #7fb2e0; background: #cce4f7; color: #1e2b4f; font: bold 14px/16px "Liberation Serif", serif; }
.g-brush { width: 44px; }
.g-shapes { width: 196px; }
.g-shapes .body { gap: 4px; padding: 0 4px; }
.gallery { display: flex; height: 48px; margin: 4px 0 0; border: 1px solid #d5dde6; background: #fbfdff; }
.scroll { display: grid; width: 10px; border-left: 1px solid #dde3ea; }
.scroll button { display: grid; place-items: center; }
.up { transform: rotate(180deg); }
.g-size { width: 42px; }
.g-colors { width: 284px; }
.g-colors .body { padding-left: 2px; }
.w-col { width: 33px; height: 54px; margin-top: 1px; padding-top: 3px; }
.w-col span { margin-top: 1px; }
.sel { background: #c9e0f7; border: 1px solid #6ea6d9; padding-top: 3px; }
.ink { border: 1px solid #888; }
.black { width: 25px; height: 25px; background: #000; box-shadow: inset 0 0 0 1px #d4e6f8; }
.white { width: 19px; height: 19px; margin: 3px 0 4px; background: #fff; }
.palette { display: grid; flex: none; grid-template-columns: repeat(10, 16px); grid-template-rows: repeat(3, 16px); justify-content: space-between; align-content: space-between; width: 173px; height: 51px; margin: 2px 0 0 2px; }
.palette i { border: 1px solid #a0a0a0; box-shadow: inset 0 0 0 1px #f6f5f9; }
.c1 { background: #000; } .c2 { background: #7f7f7f; } .c3 { background: #880015; } .c4 { background: #ed1c24; } .c5 { background: #ff7f27; }
.c6 { background: #fff200; } .c7 { background: #22b14c; } .c8 { background: #00a2e8; } .c9 { background: #3f48cc; } .c10 { background: #a349a4; }
.c11 { background: #fff; } .c12 { background: #c3c3c3; } .c13 { background: #b97a57; } .c14 { background: #ffaec9; } .c15 { background: #ffc90e; }
.c16 { background: #efe4b0; } .c17 { background: #b5e61d; } .c18 { background: #99d9ea; } .c19 { background: #7092be; } .c20 { background: #c8bfe7; }
.w-edit { width: 34px; }
.g-3d { width: 49px; white-space: nowrap; }
.g-colors .w-edit span, .g-3d span { margin-top: 1px; }

.workspace { height: 448px; padding: 4px 50px 0 4px; background: linear-gradient(#c8d0e4, #cdd5e7 50%, #dde3f2 90%); }
.canvas { position: relative; height: 384px; background: #fff; box-shadow: 3px 3px 4px #a4abbc; clip-path: inset(0 -8px -8px 0); }
.art { overflow: hidden; max-width: 100%; }
.code { font: 11px "DejaVu Sans Mono", monospace; fill: #2b2b2b; }
.kw { fill: #1c1c8c; font-weight: bold; }
.fn { fill: #1c1c8c; }
.str { fill: #10801c; font-weight: bold; }
.label { font: 22px "Liberation Sans", Arial, sans-serif; fill: #000; }
.kumar { font-size: 21px; stroke: #000; stroke-width: 0.500; }
.handle { position: absolute; width: 4px; height: 4px; background: #fff; border: 1px solid #444; }
.h-r { right: -3px; top: 50%; }
.h-b { left: 50%; bottom: -4px; }
.h-c { right: -3px; bottom: -4px; }

.status { display: flex; height: 19px; background: #f1f0f3; border-top: 1px solid #e8eaf2; color: #222; }
.status > div { display: flex; align-items: center; gap: 4px; padding-left: 4px; border-right: 1px solid #d9d9de; white-space: nowrap; }
.status .s1 { width: 124px; padding-left: 3px; gap: 5px; }
.status .s2 { width: 123px; }
.status .s3 { width: 124px; }
.status .s4 { width: 124px; padding-left: 5px; }
.status .s5 { flex: 1; }
.status .s6 { width: 157px; padding-left: 16px; border: 0; }
.s6 button { flex: none; width: 13px; height: 13px; border: 1px solid #777; border-radius: 50%; line-height: 10px; font-size: 12px; }
.s6 input { appearance: none; width: 68px; height: 13px; margin: 0 3px 0 4px; background: linear-gradient(#dcdce0, #dcdce0) center / 100% 3px no-repeat; }
.s6 input::-webkit-slider-thumb { appearance: none; width: 8px; height: 13px; background: #0a78d6; clip-path: polygon(0 0, 100% 0, 100% 75%, 50% 100%, 0 75%); }

.bar { display: flex; }
.app, .start { display: grid; place-items: center; flex: none; }
.tray { display: flex; align-items: center; margin-left: auto; }
.tray > span { display: flex; justify-content: center; }
.clock { text-align: center; }
.notif { position: relative; display: flex; justify-content: center; align-items: center; }
.notif em { position: absolute; border-radius: 50%; text-align: center; }
.peek { align-self: stretch; border-left: 1px solid #999; }

.inner { height: 32px; background: linear-gradient(90deg, #cfe5f1, #d6e6f1 60%, #d7ddef); color: #222; }
.inner .start { width: 39px; }
.searchbox { display: flex; align-items: center; width: 271px; padding-left: 8px; gap: 8px; background: #fff; border: 1px solid #ccd3d8; }
.searchbox input { flex: 1; min-width: 0; border: 0; padding: 0; background: none; font: 11px "Open Sans", sans-serif; }
.searchbox input::placeholder { color: #444; opacity: 1; }
.inner .app { width: 39px; }
.inner .run { background: linear-gradient(#0a78d0, #0a78d0) center bottom / 32px 2px no-repeat; }
.inner .active { background: linear-gradient(#0a78d0, #0a78d0) center bottom / 100% 2px no-repeat, #eff4fa; }
.inner .people { margin-right: 23px; }
.inner .tray > span { width: 19px; }
.inner .tray .moon { width: 32px; }
.inner .tray .temp { width: 34px; justify-content: flex-start; font-size: 11px; }
.inner .tray .pen { width: 24px; }
.inner .clock { width: 56px; line-height: 14px; white-space: nowrap; }
.inner .notif { width: 38px; height: 32px; padding-right: 4px; color: #111; }
.inner .notif em { right: 9px; bottom: 3px; width: 13px; height: 13px; border: 1px solid #888; background: #dfe3ec; line-height: 11px; }
.inner .peek { width: 4px; }

.outer { height: 40px; padding-left: 4px; background: #080808; color: #fff; }
.outer .app { width: 49px; }
.outer .run { background: linear-gradient(#a5d8f5, #a5d8f5) center bottom / 40px 2px no-repeat; }
.outer .multi { background: linear-gradient(90deg, #a5d8f5 32px, #6f97b0 32px) center bottom / 40px 2px no-repeat; }
.outer .active { background: linear-gradient(#a5d8f5, #a5d8f5) center bottom / 100% 2px no-repeat, #3a3a3a; }
.outer .people { margin-right: 16px; }
.outer .tray > span { width: 24px; }
.outer .tray .keys { width: 30px; }
.outer .clock { width: 68px; font-size: 11px; line-height: 18px; }
.outer .notif { width: 46px; height: 40px; padding-right: 10px; }
.outer .notif em { right: 12px; bottom: 4px; width: 17px; height: 17px; border: 1px solid #888; background: #2b2b2b; font-size: 11px; line-height: 15px; }
.outer .peek { width: 5px; }
```
